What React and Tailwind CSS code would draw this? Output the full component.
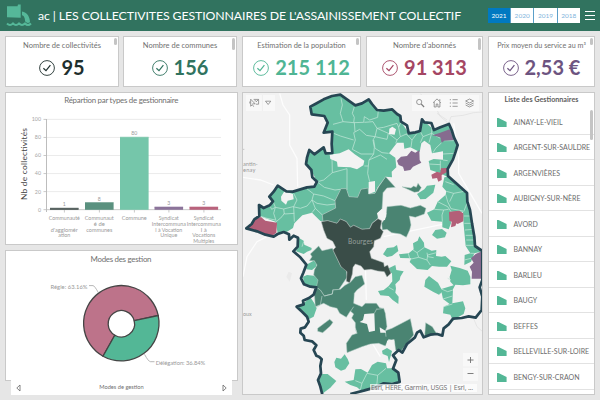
import React from "react";

const stats = [
  { label: "Nombre de collectivités", value: "95", color: "text-[#1f302e]", bar: "h-[7px]", size: "text-[7.5px]" },
  { label: "Nombre de communes", value: "156", color: "text-[#30735f]", bar: "h-[12px]", size: "text-[7.5px]" },
  { label: "Estimation de la population", value: "215 112", color: "text-[#4fb594]", bar: "h-[7px]", size: "text-[7.4px]" },
  { label: "Nombre d'abonnés", value: "91 313", color: "text-[#a54663]", bar: "h-[12px]", size: "text-[7.6px]" },
  { label: "Prix moyen du service au m³", value: "2,53 €", color: "text-[#6d5480]", bar: "h-[7px]", size: "text-[7.2px]" },
];

function Stat({ s, w }) {
  return (
    <div className={"relative flex h-[51px] flex-col items-center border border-[#c9c9c9] bg-white " + w}>
      <div className={"mt-[3px] h-[11px] whitespace-nowrap leading-[11px] text-[#707070] " + s.size}>{s.label}</div>
      <div className={"mt-[4px] flex items-center gap-[6px] " + s.color}>
        <svg width="16" height="16" viewBox="0 0 16 16" fill="none" stroke="currentColor">
          <circle cx="8" cy="8" r="7.4" strokeWidth="0.9" />
          <path d="M4.4 8.2 7 10.6 11.4 5.2" strokeWidth="1.2" />
        </svg>
        <span className="whitespace-nowrap text-[20px] font-bold leading-[25px]">{s.value}</span>
      </div>
      <div className={"absolute right-[1px] top-[1px] w-[3px] rounded-full bg-[#c4c4c4] " + s.bar} />
    </div>
  );
}

const bars = [
  { v: 1, x: 50, y: 118.2, h: 1.6, c: "#45524f", lines: ["Communauté", "", "d'agglomér", "ation"], w: [31, 0, 27, 12] },
  { v: 8, x: 85, y: 112.6, h: 7.2, c: "#5a917f", lines: ["Communaut", "é de", "communes"], w: [29, 11, 26] },
  { v: 80, x: 120, y: 47.2, h: 72.6, c: "#75c6aa", lines: ["Commune"], w: [25] },
  { v: 3, x: 154.5, y: 117, h: 2.8, c: "#8c749a", lines: ["Syndicat", "Intercommuna", "l à Vocation", "Unique"], w: [20, 34, 27, 17] },
  { v: 3, x: 189.5, y: 117, h: 2.8, c: "#b9637d", lines: ["Syndicat", "Intercommuna", "l à", "Vocations", "Multiples"], w: [20, 34, 6, 23, 21] },
];

function BarChart() {
  return (
    <svg width="232" height="151" viewBox="6 93 232 151" className="block">
      <text x="64.3" y="103.4" fontSize="7.9" fill="#707070" textLength="114">Répartion par types de gestionnaire</text>
      <text transform="translate(26.7 200) rotate(-90)" fontSize="8.4" fill="#444" textLength="72">Nb de collectivités</text>
      {[100, 80, 60, 40, 20, 0].map((n, i) => (
        <g key={n}>
          <path d={`M47 ${119.4 + i * 18.05}H221`} stroke={n ? "#e9e9e9" : "#c4c4c4"} strokeWidth="0.9" />
          <path d={`M43.5 ${119.4 + i * 18.05}h3`} stroke="#bbb" strokeWidth="0.8" />
          <text x="41" y={121.3 + i * 18.05} fontSize="5.3" fill="#a5a5a5" textAnchor="end">{n}</text>
        </g>
      ))}
      <path d="M46.5 119V212" stroke="#b5b5b5" strokeWidth="0.9" />
      {bars.map((b, i) => (
        <g key={i}>
          <rect x={b.x} y={b.y + 90} width="28.6" height={b.h} fill={b.c} />
          <path d={`M${b.x} ${b.y + 90}h28.6`} stroke={b.c} strokeWidth="0.6" />
          <path d={`M${b.x + 14.4} 210v2.5`} stroke="#bbb" strokeWidth="0.8" />
          <text x={b.x + 14.3} y={b.y + 88} fontSize="5.2" fill="#999" textAnchor="middle">{b.v}</text>
          {b.lines.map((l, j) => l && (
            <text key={j} x={b.x + 14.3} y={220.2 + j * 5.75} fontSize="4.9" fill="#999" textAnchor="middle" textLength={b.w[j]} lengthAdjust="spacingAndGlyphs">{l}</text>
          ))}
        </g>
      ))}
    </svg>
  );
}

function Donut() {
  return (
    <svg width="232" height="130" viewBox="6 251 232 130" className="block">
      <text x="90.5" y="262" fontSize="7.9" fill="#707070" textLength="61">Modes des gestion</text>
      <g stroke="#454545" strokeWidth="1.3">
        <path d="M158.2 315.5A37.7 37.7 0 1 0 103 356.2L114.8 335.2A13.2 13.2 0 1 1 134.2 320.7Z" fill="#bd738a" />
        <path d="M158.2 315.5A37.7 37.7 0 0 1 103 356.2L114.8 335.2A13.2 13.2 0 0 0 134.2 320.7Z" fill="#53b796" />
      </g>
      <g fill="none" stroke="#999" strokeWidth="0.7">
        <path d="M89 285.6h4q1.5 0 5.5 7.3" />
        <path d="M144.5 354.3q4 7.4 6 7.4h4" />
      </g>
      <text x="50.5" y="288.6" fontSize="5.8" fill="#999" textLength="37">Régie: 63.16%</text>
      <text x="155.7" y="364.6" fontSize="5.8" fill="#999" textLength="49.5">Délégation: 36.84%</text>
    </svg>
  );
}

const BORDER =
  "M246 914 240 890 233 870 242 850 240 828 244 808 236 800 228 797 220 780 228 766 215 754 193 750 190 737 180 728 181 716 194 712 205 695 200 680 186 666 169 650 190 643 188 632 206 624 220 614 228 592 210 590 191 583 182 565 189 548 198 524 180 502 159 484 172 470 173 443 160 437 147 449 146 433 130 426 112 432 100 440 75 434 50 424 18 415 34 402 42 388 57 378 56 345 70 354 88 346 98 334 87 320 100 305 112 287 138 304 158 305 200 292 222 290 230 275 216 262 213 240 197 222 200 203 207 180 222 193 250 172 256 190 276 189 274 162 276 125 250 128 262 98 252 78 214 73 210 50 225 42 250 28 275 18 300 14 325 32 345 46 365 40 385 28 395 42 410 60 430 62 455 58 470 72 480 78 482 95 500 106 505 130 525 127 539 123 545 88 552 97 573 99 581 120 600 112 626 102 634 120 641 142 652 165 646 185 638 208 622 237 623 258 650 282 680 309 681 335 689 360 695 400 702 440 704 468 726 483 726 570 718 592 726 620 724 660 706 683 685 679 664 684 638 686 625 703 610 715 606 737 590 732 570 734 550 742 540 722 530 728 524 742 500 762 486 788 475 780 458 796 468 810 458 836 474 848 478 876 455 882 430 880 405 892 370 902 330 912";

const green = [
  "57 378 57 345 70 354 88 346 98 334 87 320 100 305 112 287 138 304 158 305 200 292 222 290 230 275 213 240 197 222 207 180 222 193 250 172 256 190 276 189 276 125 250 128 262 98 252 78 214 73 210 50 250 28 300 14 345 46 385 28 410 60 455 58 480 78 482 95 505 130 539 123 545 88 581 120 626 102 652 165 622 237 623 262 600 250 570 240 565 213 580 207 608 209 608 184 575 190 570 165 552 152 543 160 538 186 510 172 492 176 490 158 470 158 446 190 465 203 468 232 454 245 455 262 436 260 412 292 404 310 385 312 383 294 362 298 352 322 326 320 318 296 302 296 284 332 286 354 246 374 248 394 240 393 215 368 186 376 162 400 158 414 140 425 112 430 106 395",
  "612 262 623 260 650 282 680 309 681 335 689 360 695 400 702 440 704 468 722 485 702 490 692 515 672 525 673 495 690 490 676 468 670 405 668 365 630 365 632 400 625 418 606 412 606 395 573 392 560 368 582 358 592 335 616 314 618 304 606 290",
  "530 312 552 298 560 287 585 284 579 308 556 327 540 328",
  "575 435 585 420 605 417 619 428 614 442 590 446",
  "428 493 440 474 460 472 470 465 474 483 455 498 440 501",
  "476 493 505 490 520 478 518 460 532 452 537 439 551 458 552 472 574 482 588 480 587 498 604 500 615 498 633 514 620 530 596 530 575 528 562 540 530 537 508 516 513 505 480 504",
  "552 590 555 570 566 558 593 578 603 597 640 586 630 575 628 560 634 540 630 527 658 534 682 542 690 560 690 583 668 586 645 584 638 598 636 640 668 634 675 655 670 672 650 683 638 692 630 674 608 670 610 650 628 642 608 627 604 608 596 614 578 605",
  "445 535 465 525 468 540 490 544 480 560 478 570 465 583 467 595 465 608 475 620 474 642 457 630 445 618 420 616 413 603 430 600 445 588 456 574 455 550 443 546",
  "172 470 176 444 190 452 192 464 214 474 213 480 200 485 190 492 167 484",
  "198 524 220 512 230 518 227 530 215 540 198 538",
  "188 560 200 555 220 557 233 565 240 588 222 590 191 583",
  "169 650 190 640 210 622 222 640 229 655 220 680 205 688 190 665",
  "282 816 288 803 302 806 313 793 322 807 327 820 315 838 302 842 285 832",
  "242 852 262 852 288 873 270 893 245 912 233 872",
  "313 875 340 870 345 838 362 837 382 848 395 825 412 815 437 820 440 835 462 835 474 848 478 876 440 880 425 888 400 895 372 902 360 900 350 892 330 885",
  "425 782 440 774 455 783 452 795 446 816 442 798 427 792",
];

const mid = [
  "246 374 286 354 284 332 302 296 318 296 326 320 352 322 362 298 383 294 385 312 404 310 415 290 436 260 465 292 440 294 428 308 427 330 425 358 412 370 413 385 395 400 388 416 365 418 340 406 330 412 318 395 300 387 290 400 262 392 248 394",
  "426 420 424 400 437 380 440 350 482 346 510 354 540 346 557 355 552 372 525 382 507 378 512 405 508 420 498 442 480 432 454 428 440 418",
  "485 290 512 294 520 288 528 292 533 280 543 293 535 305 522 307",
  "207 512 215 500 210 492 235 468 245 482 276 475 290 505 302 530 318 538 320 562 308 580 296 598 278 600 276 612 252 618 240 600 228 592 233 570 220 555 222 540 230 525 222 512",
  "222 612 228 592 240 600 252 618 276 612 278 600 300 598 314 586 330 577 345 560 365 556 373 582 350 600 342 610 340 640 365 650 375 640 408 640 418 653 430 655 435 670 440 710 435 722 455 715 510 686 520 735 500 760 480 786 466 780 462 752 445 748 435 768 415 760 390 762 365 770 320 788 318 760 335 735 350 730 345 712 345 698 334 684 340 672 330 663 318 682 298 670 290 655 270 650 250 640 225 650",
  "232 715 252 700 268 688 278 697 270 708 247 728 232 724",
  "553 738 556 698 576 710 588 730 575 736",
];

const holes = [
  "268 194 298 190 325 178 343 193 372 212 369 226 350 238 330 232 292 230 290 215 270 207",
  "122 320 132 304 146 308 158 312 160 328 142 332 137 344 123 332",
  "447 116 456 110 467 118 463 134 446 132",
  "385 276 404 273 404 305 385 312",
  "410 370 424 357 438 370 434 390 418 392",
  "372 672 402 670 404 722 386 726 380 702 358 696 368 690",
  "418 712 435 722 437 728 420 728",
  "440 752 462 748 462 770 438 770",
];

const darkCity =
  "243 395 262 392 290 400 300 387 318 395 330 412 340 406 365 418 388 416 396 400 413 386 424 392 420 415 429 425 420 445 402 452 400 470 388 485 393 505 430 518 432 530 442 525 452 550 440 561 432 545 412 543 392 538 372 540 362 528 345 522 338 532 336 552 328 578 318 574 320 545 302 530 290 505 278 480 286 472 277 454 260 445 250 420";

const purple = [
  "470 212 482 200 500 198 513 182 525 188 537 180 538 210 543 218 518 230 510 240 492 243 488 230 475 225",
  "576 136 600 128 628 118 641 150 612 152 604 158 600 142",
  "692 505 706 492 724 484 724 566 694 566 695 545 688 530 700 518",
];
const red = [
  "573 254 590 245 600 248 602 235 620 234 620 246 604 255 604 270 594 275 590 264 576 266",
  "626 366 640 364 657 362 669 370 669 394 652 402 648 400 645 408 632 412 634 395 627 392",
  "18 415 34 402 42 388 62 381 75 392 110 398 108 428 92 440 50 424",
];

const LINES =
  "M302 25 306 45 300 70 308 95 340 98 342 82 336 70 342 50M308 95 278 103M340 98 370 97 372 80 388 90 412 82 414 60M372 97 398 95 410 115 404 140 378 136 358 118 340 128 345 150 336 178 362 192 400 192 402 172 398 150 404 140 440 148 444 130 410 115M342 98 344 125M280 130 300 138 340 150M400 150 404 175 425 188 445 190M400 192 386 210 384 228 372 228M320 236 320 300M275 205 276 248 250 270 232 275M276 248 320 236M384 228 382 250 388 275M386 210 420 195 440 208M444 130 470 150 480 140 475 112 482 96M475 112 470 100 430 112 410 115M470 150 466 160M480 140 498 132 506 130M498 132 515 150 530 130M515 150 512 172M539 123 548 140 540 158M575 105 574 130 566 158M548 140 574 130 600 145M604 158 586 175 578 188M610 152 640 152M608 192 642 190M600 212 600 240M622 212 608 210M565 222 600 224M230 275 252 292 284 300 300 298M198 295 220 312 215 330 230 340 260 345 284 342M220 312 250 318 284 332M215 330 225 355 245 374M160 310 170 330 160 350 162 395M98 334 105 352 130 357 158 350M105 352 100 370 108 395M58 378 80 385 105 390M130 357 132 372 162 370M108 395 125 380 132 370M88 346 94 358 105 352M158 350 180 355 200 348 215 330M225 355 215 368M615 275 640 284M618 304 640 310 672 304M616 314 622 335 632 356 668 363M640 310 628 335M592 335 622 350 632 365M582 358 610 360 625 358M610 360 605 375 606 395M680 340 670 365M670 378 692 378M672 400 696 400M674 420 698 418M676 436 700 436M678 450 702 450M676 466 704 466M690 490 702 490M672 510 692 505M504 490 508 505M518 480 530 488 552 472M530 488 535 502 508 508M535 502 560 510 562 495 588 488M560 510 570 525M560 488 562 500 580 503M596 614 604 608M603 597 622 605 638 600M622 565 632 570M608 627 636 618M610 650 636 642M445 592 460 600M345 872 365 880 380 850M380 850 412 856 437 835M412 856 410 880 400 895M365 880 360 900M190 455 185 470";

const MIDLINES = "M222 612 228 592M245 618 240 645 228 652M252 618 276 612 278 598M350 730 345 718M410 658 430 655M402 670 410 655M340 650 330 665M435 722 437 740";

function MapDrawing() {
  return (
    <svg width="240" height="301" viewBox="8 9 720 903" className="block bg-[#f2f2f2]">
      <g fill="none" stroke="#fff" strokeWidth="4" opacity=".8">
        <path d="M118 10 128 45 148 75 148 165 170 205 172 290M8 262 60 270 100 285M8 560 20 500 50 455 80 440M640 100 655 200 655 250 690 310 725 370M430 440 620 400M375 520 378 630M390 750 420 800" />
      </g>
      <g fill="none" stroke="#dedede" strokeWidth="2">
        <path d="M540 12 580 40 600 80 625 100 632 80 668 76 700 68 727 66M590 70 620 90M700 686 710 710 728 726" />
      </g>
      <path d="M138 560 145 545 155 550 148 575Z" fill="#eaeaea" />
      <g fontSize="17" fill="#999">
        <text x="8" y="229" textLength="44">antin-</text>
        <text x="8" y="246" textLength="37">enay</text>
        <text x="8" y="677" fontSize="16" textLength="26">oux</text>
        <path d="M8 178h4" stroke="#999" strokeWidth="1.5" />
      </g>
      <g fill="#67bfa1" strokeLinejoin="round">{green.map((p, i) => <polygon key={i} points={p} />)}</g>
      <path d={LINES} fill="none" stroke="#c3e6d9" strokeWidth="2.2" strokeLinejoin="round" />
      <g fill="#4a8472" stroke="#b5cfc7" strokeWidth="1.5">{mid.map((p, i) => <polygon key={i} points={p} />)}</g>
      <path d={MIDLINES} fill="none" stroke="#b5cfc7" strokeWidth="2" />
      <g fill="#f3f3f3">{holes.map((p, i) => <polygon key={i} points={p} />)}</g>
      <polygon points={darkCity} fill="#3a4d48" stroke="#aebbb7" strokeWidth="1.5" />
      <g fill="#866b8f">{purple.map((p, i) => <polygon key={i} points={p} />)}</g>
      <g fill="#b35f78">{red.map((p, i) => <polygon key={i} points={p} />)}</g>
      <path d={BORDER} fill="none" stroke="#264653" strokeWidth="8.2" strokeLinejoin="round" />
      <text x="323" y="461" fontSize="20" fill="#96a09d" textLength="75">Bourges</text>
    </svg>
  );
}

function MapTools() {
  return (
    <>
      <div className="absolute left-[3px] top-[2px] flex h-[16px] w-[29px] bg-[#f8f8f8]">
        <svg width="29" height="16" viewBox="0 0 29 16" fill="none" stroke="#777" strokeWidth="0.7">
          <path d="M4.7 4.2v7l1.7-1.5 1.3 2M4.7 4.2l4.4 4.6H6.4M7.6 4.4h5v4.8H9.8M12.4 4.6 10 7M8.5 5.8h1.6M3.8 6.5v2" />
          <path d="M16.4 0v16" stroke="#ececec" />
          <path d="M19.5 6.2h5.3l-2.65 3.3Z" />
        </svg>
      </div>
      <div className="absolute right-[3px] top-[2px] h-[16px] w-[67px] bg-[#f8f8f8]">
        <svg width="67" height="16" viewBox="0 0 67 16" fill="none" stroke="#7c7c7c" strokeWidth="0.75">
          <circle cx="7.2" cy="7" r="2.6" /><path d="m9.2 9 2.9 3" strokeWidth="1.1" />
          <path d="m21 7.8 4-3.9 4 3.9M22.2 7v5h2v-3h1.7v3h2V7M27.8 6V4.2" />
          <path d="M40.5 4.7h5.2M40.5 8h5.2M40.5 11.3h5.2M37.8 4.7h1.2M37.8 8h1.2M37.8 11.3h1.2" />
          <path d="m53.6 6 4-2 4 2-4 2Z" /><path d="m53.6 8 4 2 4-2M53.6 10l4 2 4-2" />
        </svg>
      </div>
      <div className="absolute bottom-[13px] right-[4px] h-[28px] w-[15px] bg-[#f8f8f8]">
        <svg width="15" height="28" viewBox="0 0 15 28" stroke="#707070" strokeWidth="0.9">
          <path d="M4.5 7h6M7.5 4v6M4.5 20.5h6" /><path d="M0 14h15" stroke="#eee" />
        </svg>
      </div>
      <div className="absolute bottom-[2px] right-[5px] h-[8px] w-[107px] bg-white/70">
        <svg width="107" height="8" className="block"><text x="1" y="6.2" fontSize="6.8" fill="#777" textLength="102" fontFamily="Noto Sans, sans-serif">Esri, HERE, Garmin, USGS | Esri, ...</text></svg>
      </div>
    </>
  );
}

const names = ["AINAY-LE-VIEIL", "ARGENT-SUR-SAULDRE", "ARGENVIÈRES", "AUBIGNY-SUR-NÈRE", "AVORD", "BANNAY", "BARLIEU", "BAUGY", "BEFFES", "BELLEVILLE-SUR-LOIRE", "BENGY-SUR-CRAON"];

export default function App() {
  return (
    <div className="flex h-[400px] w-[600px] flex-col overflow-hidden bg-[#e6e6e6] font-[Lato,sans-serif]">
      <header className="flex h-[31px] shrink-0 items-center bg-[#31735f] pl-[6px] pr-[5px] text-white">
        <svg width="26" height="26" viewBox="0 0 26 26" fill="#55b899">
          <path d="M1 3.2 11.5 3.2 12 1.5 14.7 1.5 14.7 14.8 1 14.3ZM16 8.5C21 9 24 14 24 19.2Q21.5 21 19.2 18.6C19 15.5 18.2 12.5 16 12.2Z" />
          <path d="M1 20.5q3 3 6 0 3 3 6 0 3 3 6 0 3 3 6 0" fill="none" stroke="#55b899" strokeWidth="2" />
        </svg>
        <h1 className="ml-[6px] w-[440px] whitespace-nowrap text-[12.3px] leading-[20px] tracking-[-0.1px]">ac | LES COLLECTIVITES GESTIONNAIRES DE L'ASSAINISSEMENT COLLECTIF</h1>
        <div className="ml-auto flex h-[15px] w-[92px] gap-px bg-[#5b9fc9] text-[6.5px] leading-[15px]">
          <span className="w-[22px] bg-[#0079c1] text-center">2021</span>
          {["2020", "2019", "2018"].map((y) => <span key={y} className="flex-1 bg-white text-center text-[#82b4dc]">{y}</span>)}
        </div>
        <svg className="ml-[5px]" width="10" height="15" stroke="#fff" strokeWidth="1"><path d="M0 3.5h10M0 7.5h10M0 11.5h10" /></svg>
      </header>
      <div className="flex gap-[5px] px-[5px] pt-[5px]">
        <div className="flex w-[232px] gap-[4px]">
          <Stat s={stats[0]} w="w-[114px]" />
          <Stat s={stats[1]} w="w-[114px]" />
        </div>
        <Stat s={stats[2]} w="w-[119px]" />
        <Stat s={stats[3]} w="w-[117px]" />
        <Stat s={stats[4]} w="w-[107px]" />
      </div>
      <main className="flex gap-[5px] px-[5px] pt-[5px]">
        <section className="flex w-[232px] flex-col">
          <div className="h-[153px] w-[233px] overflow-hidden border border-[#c9c9c9] bg-white"><BarChart /></div>
          <div className="mt-[5px] h-[131px] w-[233px] overflow-hidden border border-[#c9c9c9] bg-white"><Donut /></div>
          <div className="z-10 -mt-px ml-[6px] flex h-[15px] w-[221px] items-center justify-between bg-white px-[5px] text-[5.7px] text-[#707070]">
            <svg width="5" height="8" fill="none" stroke="#666" strokeWidth=".8"><path d="M4 1v6L.8 4Z" /></svg>
            <span>Modes de gestion</span>
            <svg width="5" height="8" fill="none" stroke="#666" strokeWidth=".8"><path d="M1 1v6L4.2 4Z" /></svg>
          </div>
        </section>
        <section className="relative h-[303px] w-[241px] shrink-0 overflow-hidden border border-[#c9c9c9]">
          <MapDrawing />
          <MapTools />
        </section>
        <section className="relative h-[303px] w-[107px] overflow-hidden border border-[#c9c9c9] bg-white">
          <h2 className="h-[16px] pt-[2px] text-center text-[7.2px] font-bold leading-[10px] text-[#606060]">Liste des Gestionnaires</h2>
          {names.map((n) => (
            <div key={n} className="flex h-[25.5px] items-center border-b border-[#e2e2e2] pl-[7.5px] pt-[1px]">
              <svg width="10" height="9" className="mt-[1px] shrink-0"><path d="M0 0H1.5L9.6 4V9H0Z" fill="#53b796" /></svg>
              <span className="ml-[7px] whitespace-nowrap text-[7px] leading-[10px] text-[#6c6c6c]">{n}</span>
            </div>
          ))}
          <div className="absolute right-[1px] top-[17px] h-[30px] w-[3px] rounded-full bg-[#c4c4c4]" />
        </section>
      </main>
    </div>
  );
}
